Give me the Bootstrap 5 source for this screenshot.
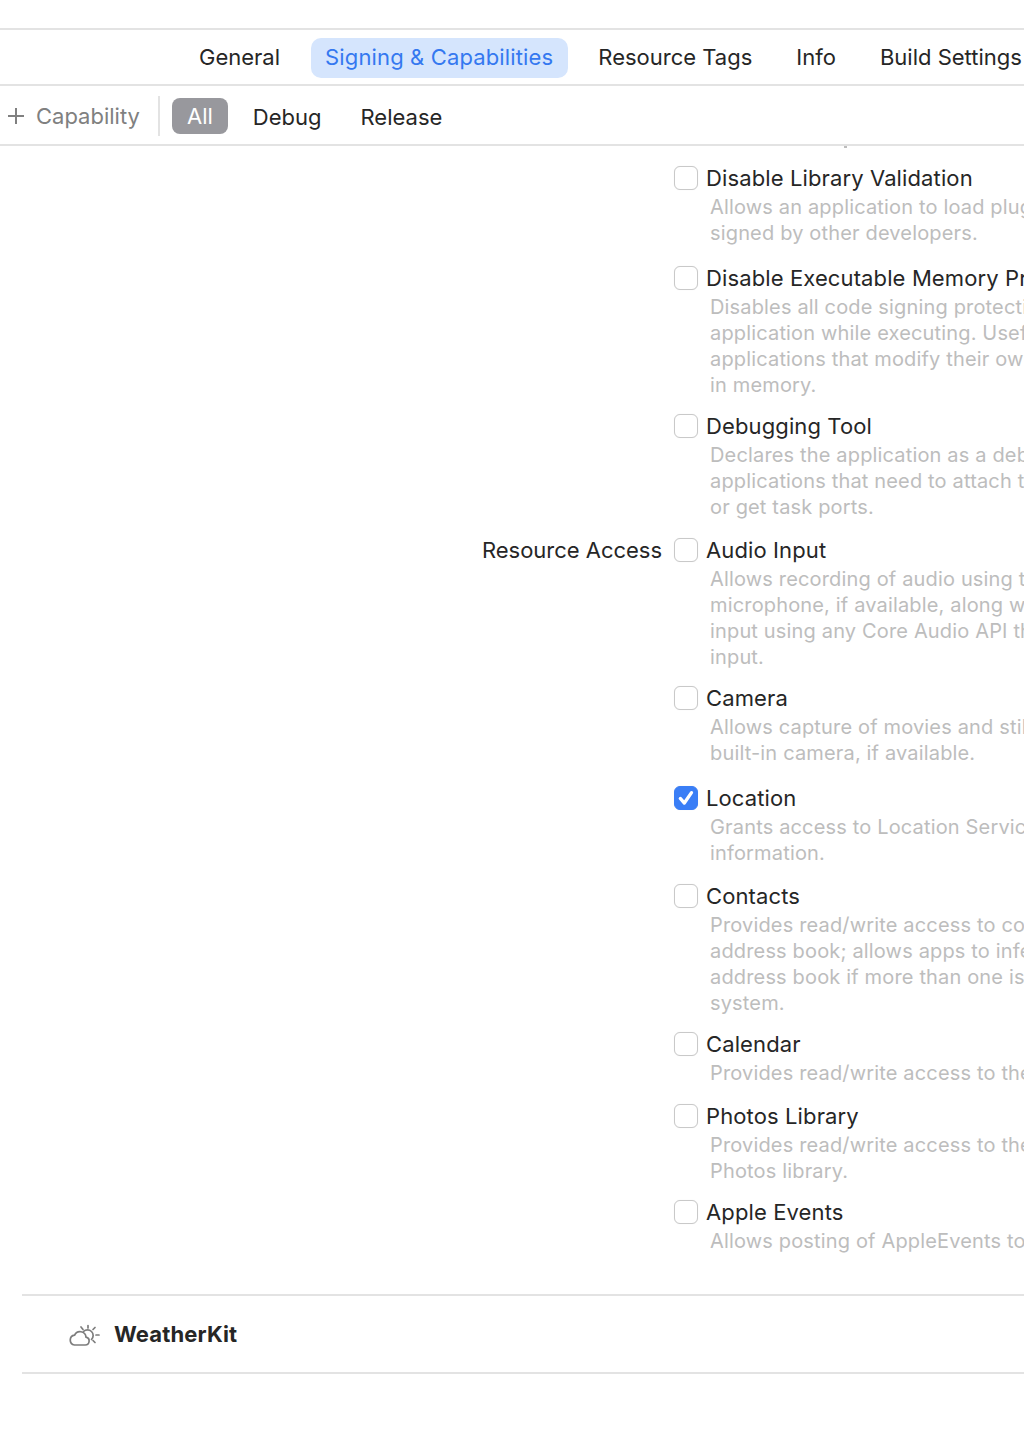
<!DOCTYPE html>
<html lang="en">
<head>
<meta charset="utf-8">
<title>Signing &amp; Capabilities</title>
<link href="https://cdn.jsdelivr.net/npm/bootstrap@5.3.0/dist/css/bootstrap.min.css" rel="stylesheet">
<style>
html,body{height:100%;overflow:hidden;background:#fff;}
body{font-family:Inter,"Liberation Sans",sans-serif;font-size:22px;letter-spacing:.12px;color:#262626;width:1024px;}
.shell{width:1024px;height:1446px;overflow:hidden;}
.top-gap{height:28px;border-bottom:2px solid #e3e3e3;box-sizing:content-box;}
.tabs-bar{height:54px;border-bottom:2px solid #e3e3e3;box-sizing:content-box;padding-left:185px;gap:16px;white-space:nowrap;letter-spacing:0;}
.tab-item{height:40px;line-height:39px;padding:0 14px;border-radius:10px;margin-top:2px;}
.tab-item.is-on{background:#d5e5fd;color:#3478f0;letter-spacing:.14px;padding-right:15px;margin-left:1px;}
.filter-bar{height:56px;padding-top:2px;border-bottom:2px solid #e3e3e3;box-sizing:content-box;white-space:nowrap;}
.add-cap{width:158px;padding-left:7px;color:#808080;gap:11px;letter-spacing:0;}
.bar-div{width:2px;height:40px;background:#e3e3e3;margin-right:12px;}
.seg{height:36px;line-height:39px;padding:0 15px;border-radius:8px;letter-spacing:0;}
.seg.is-on{background:#98989d;color:#fff;line-height:37px;}
.seg-two{margin-left:10px;}
.seg-three{margin-left:9px;}
.scroll-area{padding-top:20px;white-space:nowrap;overflow:hidden;}
.key-col{width:662px;flex:none;text-align:right;line-height:24px;letter-spacing:-.02px;}
.cap-col{padding-left:12px;flex:none;}
.cap-item{margin-bottom:16px;}
.gap-18{margin-bottom:18px;}
.gap-20{margin-bottom:20px;}
.cap-head{height:24px;line-height:24px;gap:8px;margin-bottom:4px;}
.form-check-input.cap-box{width:24px;height:24px;margin:0;border:1px solid #c9c9c9;border-radius:6px;box-shadow:0 0 1px rgba(0,0,0,.1);float:none;flex:none;}
.form-check-input.cap-box:checked{background-color:#3a7ef6;border-color:#3a7ef6;background-size:100% 100%;background-image:url("data:image/svg+xml,%3csvg xmlns='http://www.w3.org/2000/svg' viewBox='0 0 24 24'%3e%3cpath fill='none' stroke='%23fff' stroke-width='3.6' stroke-linecap='round' stroke-linejoin='round' d='M5.8 12.5l4.4 5L18 6.2'/%3e%3c/svg%3e");}
.cap-desc{margin-left:36px;color:#bdbdbd;font-size:20px;letter-spacing:.16px;line-height:26px;}
.cap-desc span{display:block;}
.kit-head{margin:40px 0 0 22px;height:76px;border-top:2px solid #e3e3e3;border-bottom:2px solid #e3e3e3;box-sizing:content-box;padding-left:46px;gap:15px;font-weight:700;}
.kit-head span{margin-left:-1px;}
.fold-speck{position:absolute;left:844px;top:146px;width:3px;height:2px;background:#bdbdbd;}
</style>
</head>
<body>
<div class="shell position-relative">
  <div class="top-gap"></div>
  <nav class="tabs-bar d-flex align-items-center">
    <div class="tab-item">General</div>
    <div class="tab-item is-on">Signing &amp; Capabilities</div>
    <div class="tab-item">Resource Tags</div>
    <div class="tab-item">Info</div>
    <div class="tab-item">Build Settings</div>
  </nav>
  <div class="filter-bar d-flex align-items-center">
    <div class="add-cap d-flex align-items-center">
      <svg width="18" height="18" viewBox="0 0 18 18" fill="none" stroke="#808080" stroke-width="2"><path d="M9 1v16M1 9h16"/></svg>
      <span>Capability</span>
    </div>
    <div class="bar-div"></div>
    <div class="seg is-on">All</div>
    <div class="seg seg-two">Debug</div>
    <div class="seg seg-three">Release</div>
  </div>
  <div class="fold-speck"></div>
  <main class="scroll-area">
    <div class="d-flex">
      <div class="key-col"></div>
      <div class="cap-col">
        <div class="cap-item gap-20">
          <div class="cap-head d-flex align-items-center"><input class="form-check-input cap-box" type="checkbox" aria-label="Disable Library Validation"><span>Disable Library Validation</span></div>
          <div class="cap-desc"><span>Allows an application to load plug-ins or frameworks</span><span>signed by other developers.</span></div>
        </div>
        <div class="cap-item">
          <div class="cap-head d-flex align-items-center"><input class="form-check-input cap-box" type="checkbox" aria-label="Disable Executable Memory Protection"><span>Disable Executable Memory Protection</span></div>
          <div class="cap-desc"><span>Disables all code signing protections for the</span><span>application while executing. Useful for</span><span>applications that modify their own code</span><span>in memory.</span></div>
        </div>
        <div class="cap-item gap-18">
          <div class="cap-head d-flex align-items-center"><input class="form-check-input cap-box" type="checkbox" aria-label="Debugging Tool"><span>Debugging Tool</span></div>
          <div class="cap-desc"><span>Declares the application as a debugger for</span><span>applications that need to attach to processes</span><span>or get task ports.</span></div>
        </div>
      </div>
    </div>
    <div class="d-flex">
      <div class="key-col">Resource Access</div>
      <div class="cap-col">
        <div class="cap-item">
          <div class="cap-head d-flex align-items-center"><input class="form-check-input cap-box" type="checkbox" aria-label="Audio Input"><span>Audio Input</span></div>
          <div class="cap-desc"><span>Allows recording of audio using the built-in</span><span>microphone, if available, along with audio</span><span>input using any Core Audio API that supports</span><span>input.</span></div>
        </div>
        <div class="cap-item gap-20">
          <div class="cap-head d-flex align-items-center"><input class="form-check-input cap-box" type="checkbox" aria-label="Camera"><span>Camera</span></div>
          <div class="cap-desc"><span>Allows capture of movies and still images using the</span><span>built-in camera, if available.</span></div>
        </div>
        <div class="cap-item gap-18">
          <div class="cap-head d-flex align-items-center"><input class="form-check-input cap-box" type="checkbox" checked aria-label="Location"><span>Location</span></div>
          <div class="cap-desc"><span>Grants access to Location Services and location</span><span>information.</span></div>
        </div>
        <div class="cap-item">
          <div class="cap-head d-flex align-items-center"><input class="form-check-input cap-box" type="checkbox" aria-label="Contacts"><span>Contacts</span></div>
          <div class="cap-desc"><span>Provides read/write access to contacts in the</span><span>address book; allows apps to infer the default</span><span>address book if more than one is on the</span><span>system.</span></div>
        </div>
        <div class="cap-item gap-18">
          <div class="cap-head d-flex align-items-center"><input class="form-check-input cap-box" type="checkbox" aria-label="Calendar"><span>Calendar</span></div>
          <div class="cap-desc"><span>Provides read/write access to the user's calendar.</span></div>
        </div>
        <div class="cap-item">
          <div class="cap-head d-flex align-items-center"><input class="form-check-input cap-box" type="checkbox" aria-label="Photos Library"><span>Photos Library</span></div>
          <div class="cap-desc"><span>Provides read/write access to the user's</span><span>Photos library.</span></div>
        </div>
        <div class="cap-item mb-0">
          <div class="cap-head d-flex align-items-center"><input class="form-check-input cap-box" type="checkbox" aria-label="Apple Events"><span>Apple Events</span></div>
          <div class="cap-desc"><span>Allows posting of AppleEvents to other applications.</span></div>
        </div>
      </div>
    </div>
    <section class="kit-head d-flex align-items-center">
      <svg width="32" height="24" viewBox="0 0 32 24" fill="none" stroke="#7d7d7d" stroke-width="1.7" stroke-linecap="round"><path d="M6.5 23h10.5a4 4 0 0 0 1-7.9 6 6 0 0 0-11.4-2 5 5 0 0 0-.1 9.9z"/><path d="M15.5 9.5a5.5 5.5 0 0 1 8 8"/><path d="M20 3.5v2.5M13 5l2 2.5M27 5.5l-2 2M28 13h3M25 18.5l2 2"/></svg>
      <span>WeatherKit</span>
    </section>
  </main>
</div>
<script src="https://cdn.jsdelivr.net/npm/bootstrap@5.3.0/dist/js/bootstrap.bundle.min.js"></script>
</body>
</html>
